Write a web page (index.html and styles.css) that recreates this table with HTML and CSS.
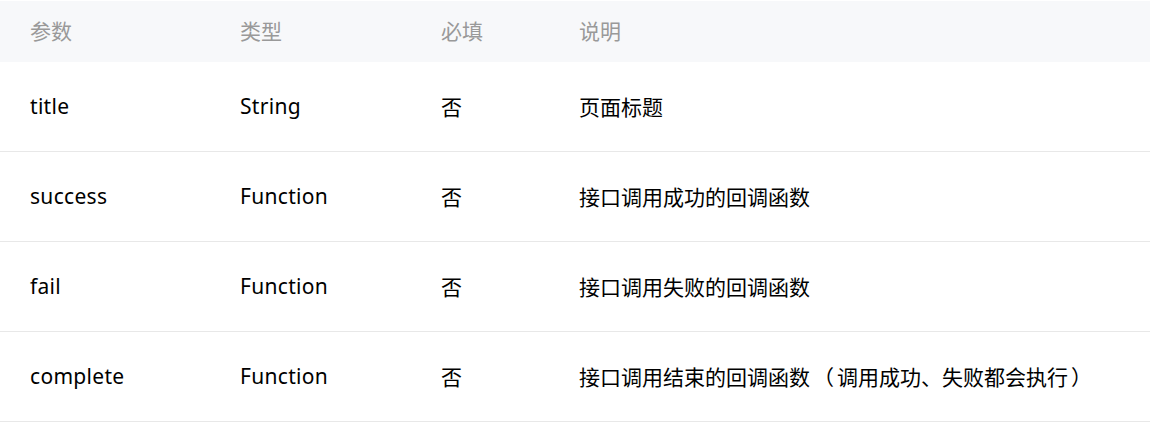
FILE: index.html
```html
<!DOCTYPE html>
<html lang="zh-CN">
<head>
<meta charset="utf-8">
<link rel="stylesheet" href="styles.css">
</head>
<body>
<div class="table">
  <div class="row head">
    <div class="cell">参数</div>
    <div class="cell">类型</div>
    <div class="cell">必填</div>
    <div class="cell">说明</div>
  </div>
  <div class="row">
    <div class="cell latin">title</div>
    <div class="cell latin">String</div>
    <div class="cell">否</div>
    <div class="cell">页面标题</div>
  </div>
  <div class="row">
    <div class="cell latin">success</div>
    <div class="cell latin">Function</div>
    <div class="cell">否</div>
    <div class="cell">接口调用成功的回调函数</div>
  </div>
  <div class="row">
    <div class="cell latin">fail</div>
    <div class="cell latin">Function</div>
    <div class="cell">否</div>
    <div class="cell">接口调用失败的回调函数</div>
  </div>
  <div class="row">
    <div class="cell latin">complete</div>
    <div class="cell latin">Function</div>
    <div class="cell">否</div>
    <div class="cell">接口调用结束的回调函数<span class="paren">（</span>调用成功、失败都会执行<span class="paren">）</span></div>
  </div>
</div>
</body>
</html>
```
FILE: styles.css
```css
html, body {
  margin: 0;
  padding: 0;
  background: #fff;
}
body {
  font-family: "Noto Sans", "Noto Sans CJK SC", sans-serif;
  font-size: 21px;
  color: #000;
}
.table {
  padding-top: 1px;
}
.row {
  display: grid;
  grid-template-columns: 210px 201px 138px 1fr;
  align-items: center;
  height: 90px;
  box-sizing: border-box;
  padding-bottom: 2px;
  border-bottom: 1px solid #e8e8e8;
}
.row.head {
  height: 61px;
  padding-bottom: 3px;
  background: #f7f8fa;
  color: #999;
  border-bottom: none;
}
.cell {
  padding-left: 30px;
  white-space: nowrap;
}
.latin {
  letter-spacing: 0.3px;
}
.paren {
  display: inline-block;
  width: 1em;
  text-align: center;
  margin: 0 3px;
}
```
